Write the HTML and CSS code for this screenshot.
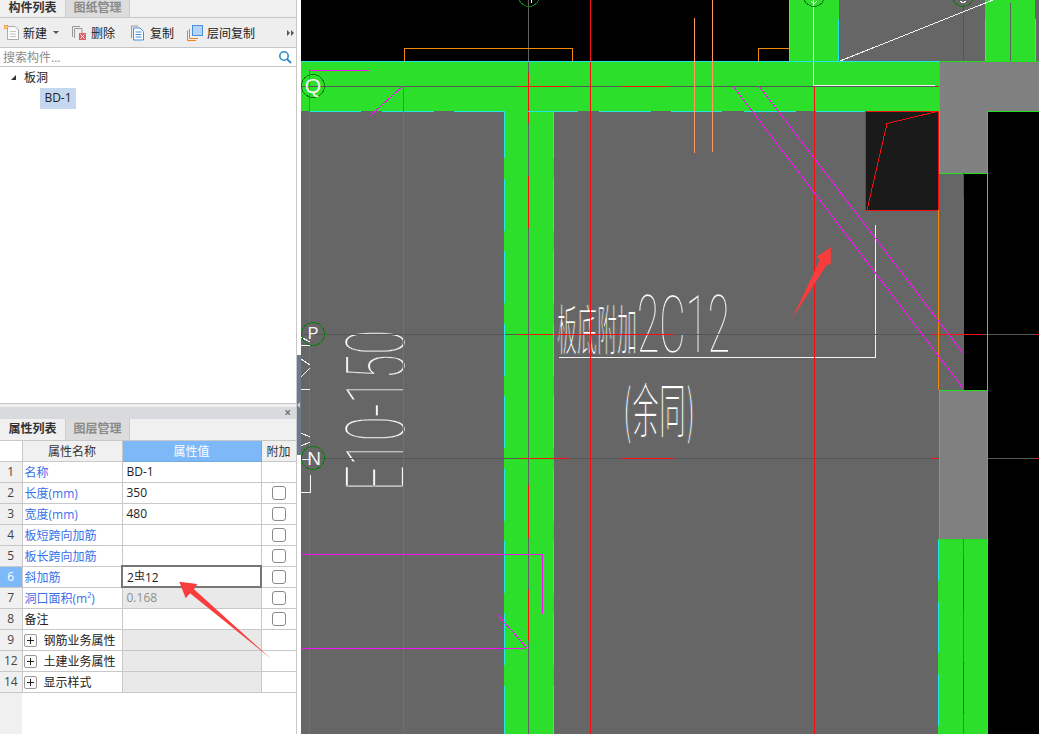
FILE: index.html
```html
<!DOCTYPE html>
<html lang="en">
<head>
    <meta charset="UTF-8">
    <title>构件列表</title>
    <link rel="stylesheet" href="styles.css">
</head>
<body>
    <div class="app">
        <div class="side">
            <div class="tabs">
                <div class="tab active">构件列表</div>
                <div class="tab">图纸管理</div>
            </div>
            <div class="toolbar">
                <div class="tool tool-new">
                    <svg width="16" height="16" viewBox="0 0 16 16"><path d="M3.5 1.5H11L14.5 5V14.5H3.5Z" fill="#fafafa" stroke="#aaa"/><path d="M6 6.5H12M6 9H12M6 11.5H12" stroke="#c4c4c4"/><rect x="0" y="0" width="4" height="4" fill="#f08a24"/><path d="M2 0V4M0 2H4" stroke="#ffd9a0"/></svg>
                    <span>新建</span>
                    <i class="caret"></i>
                </div>
                <div class="tool tool-del">
                    <svg width="16" height="16" viewBox="0 0 16 16"><path d="M1.5 12V1.5H9" fill="none" stroke="#999"/><path d="M3.5 13V3.5H11V8" fill="none" stroke="#999"/><rect x="8" y="8" width="7" height="7" fill="#e2606a"/><path d="M9.5 9.5L13.5 13.5M13.5 9.5L9.5 13.5" stroke="#fff"/></svg>
                    <span>删除</span>
                </div>
                <div class="tool tool-copy">
                    <svg width="16" height="16" viewBox="0 0 16 16"><path d="M1.5 13V1H8" fill="none" stroke="#999"/><path d="M3.5 3H10L13.5 6.500V15H3.500Z" fill="#fff" stroke="#3f8fdc"/><path d="M5.500 7H11.500M5.500 9.500H11.500M5.500 12H11.500" stroke="#3f8fdc"/></svg>
                    <span>复制</span>
                </div>
                <div class="tool tool-floor">
                    <svg width="16" height="16" viewBox="0 0 16 16"><path d="M0.500 15.500V5.500M0.500 15.500H9" fill="none" stroke="#f07f1e"/><path d="M2.500 13.500V4M2.500 13.500H11" fill="none" stroke="#f07f1e"/><rect x="5.500" y="0.500" width="10" height="10" fill="#b4d4fa" stroke="#4a90d9"/></svg>
                    <span>层间复制</span>
                </div>
                <div class="more"><i></i><i></i></div>
            </div>
            <div class="search">
                <span>搜索构件...</span>
                <svg width="14" height="14" viewBox="0 0 14 14"><circle cx="6" cy="6" r="4.200" fill="none" stroke="#2f8fc4" stroke-width="1.600"/><path d="M9 9L13 13" stroke="#2f8fc4" stroke-width="2"/></svg>
            </div>
            <div class="tree">
                <div class="tree-group"><i class="tree-arrow"></i>板洞</div>
                <div class="tree-item">BD-1</div>
            </div>
            <div class="split"></div>
            <div class="panel-head"><span class="close">×</span></div>
            <div class="tabs tabs-props">
                <div class="tab active">属性列表</div>
                <div class="tab">图层管理</div>
            </div>
            <div class="props">
                <table class="prop-table">
                    <colgroup><col class="c-num"><col class="c-name"><col class="c-val"><col class="c-add"></colgroup>
                    <thead>
                        <tr><th class="corner"></th><th>属性名称</th><th class="sel-head">属性值</th><th>附加</th></tr>
                    </thead>
                    <tbody>
                        <tr><td class="num">1</td><td class="blue">名称</td><td class="val">BD-1</td><td></td></tr>
                        <tr><td class="num">2</td><td class="blue">长度(mm)</td><td class="val">350</td><td class="chk"><i></i></td></tr>
                        <tr><td class="num">3</td><td class="blue">宽度(mm)</td><td class="val">480</td><td class="chk"><i></i></td></tr>
                        <tr><td class="num">4</td><td class="blue">板短跨向加筋</td><td class="val"></td><td class="chk"><i></i></td></tr>
                        <tr><td class="num">5</td><td class="blue">板长跨向加筋</td><td class="val"></td><td class="chk"><i></i></td></tr>
                        <tr><td class="num num-sel">6</td><td class="blue">斜加筋</td><td class="val editing">2<span class="rebar">虫</span>12</td><td class="chk"><i></i></td></tr>
                        <tr><td class="num">7</td><td class="blue">洞口面积(m²)</td><td class="val ro">0.168</td><td class="chk"><i></i></td></tr>
                        <tr><td class="num">8</td><td>备注</td><td class="val"></td><td class="chk"><i></i></td></tr>
                        <tr><td class="num">9</td><td class="grp"><i class="plus"></i>钢筋业务属性</td><td class="shade"></td><td></td></tr>
                        <tr><td class="num">12</td><td class="grp"><i class="plus"></i>土建业务属性</td><td class="shade"></td><td></td></tr>
                        <tr><td class="num">14</td><td class="grp"><i class="plus"></i>显示样式</td><td class="shade"></td><td></td></tr>
                    </tbody>
                </table>
            </div>
        </div>
        <div class="gutter"><div class="handle"><i></i></div></div>
        <div class="canvas">
            <svg class="cad" width="738" height="734" viewBox="301 0 738 734">
                <!-- slabs and walls -->
                <rect x="301" y="111" width="638" height="623" fill="#666"/>
                <rect x="939" y="173" width="25" height="217" fill="#666"/>
                <rect x="839" y="0" width="146" height="61" fill="#666"/>
                <rect x="1035" y="0" width="4" height="61" fill="#666"/>
                <rect x="301" y="61" width="638" height="50" fill="#2bdf2b"/>
                <rect x="504" y="111" width="50" height="623" fill="#2bdf2b"/>
                <rect x="789" y="0" width="50" height="61" fill="#2bdf2b"/>
                <rect x="985" y="0" width="50" height="61" fill="#2bdf2b"/>
                <rect x="938" y="539" width="49" height="195" fill="#2bdf2b"/>
                <path d="M939.500 61.500H1039V111.500H987.500V173.500H939.500Z" fill="#808080" stroke="#22dd22"/>
                <rect x="939.500" y="390.500" width="48" height="149" fill="#808080" stroke="#22dd22"/>
                <rect x="865.500" y="111.500" width="73" height="99" fill="#1a1a1a" stroke="#f01010"/>
                <path d="M867 210L887 123.500L935 112" fill="none" stroke="#f01010"/>

                <!-- annotations -->
                <text class="cad-text" transform="translate(404 491) rotate(-90) scale(1 1.330)" textLength="161" lengthAdjust="spacingAndGlyphs">E10-150</text>
                <text class="cad-text" transform="translate(637 352) scale(1 1.300)" textLength="93" lengthAdjust="spacingAndGlyphs">2C12</text>
                <text class="cad-cjk" transform="translate(557 350) scale(.4 1.100)" font-size="50" textLength="200" lengthAdjust="spacingAndGlyphs">板底附加</text>
                <text class="cad-cjk" transform="translate(623 433) scale(.8 1.200)" font-size="50" textLength="90" lengthAdjust="spacingAndGlyphs">(余同)</text>
                <path d="M875.500 225V357.500H559" stroke="#f4f4f4" fill="none"/>

                <!-- axis lines -->
                <g stroke="#565656" fill="none">
                    <path d="M301 86.500H939M301 334.500H939M301 458.500H939M983 334.500H1039M988 458.500H1039"/>
                    <path d="M963.500 0V61"/>
                    <path d="M528.500 0V734" stroke="#606060"/>
                    <path d="M1010.500 3V61" stroke="#606060"/>
                    <path d="M963.500 539V734" stroke="#3c8a50"/>
                </g>
                <g stroke="#f41010" fill="none">
                    <path d="M590.500 0V734M814.500 87V734"/>
                    <path d="M518 86.500H570M621 86.500H670M935 86.500H938"/>
                    <path d="M518 334.500H570M550 334.500H673M931 334.500H983M1035 334.500H1039"/>
                    <path d="M519 458.500H570M622 458.500H674M932 458.500H938M1036 458.500H1039"/>
                    <path d="M528.500 73V123M528.500 176V228M528.500 485V538M528.500 590V641"/>
                    <path d="M963.500 173V197M963.500 559V609M963.500 662V714"/>
                </g>
                <path d="M813.500 0V86M814 85.500H935" stroke="#f4f4f4" fill="none"/>
                <path d="M840 61L993 0" stroke="#f4f4f4" fill="none"/>

                <!-- cyan edges -->
                <g stroke="#22e6e6" fill="none">
                    <path d="M301 61.500H939"/>
                    <path d="M310 111.500H361M382 111.500H434M454 111.500H505M528 111.500H578M599 111.500H651M671 111.500H722M744 111.500H796M816 111.500H865"/>
                    <path d="M504.500 111V158M553.500 111V158"/>
                    <path d="M504.500 179V734M553.500 179V734" stroke-dasharray="52 20.400"/>
                    <path d="M789.500 0V61M838.500 19V61M985.500 19V61M1035.500 19V61"/>
                    <path d="M938.500 540V581M938.500 602V653M938.500 674V726"/>
                </g>

                <!-- orange -->
                <g stroke="#f58a0a" fill="none">
                    <path d="M404.500 61V48.500H572.500V61M758.500 61V48.500H789"/>
                    <path d="M938.500 210V390M987.500 173V390M987.500 539V734"/>
                </g>
                <path d="M694.500 18V153M712.500 0V152" stroke="#ff9a66" fill="none"/>

                <!-- magenta -->
                <g stroke="#f810f8" fill="none">
                    <path d="M309.500 71V734M403.500 86V734"/>
                    <path d="M309 70.500H369"/>
                    <path d="M403 86L370 116"/>
                    <path d="M733 86L963 388M759 86L963 353"/>
                    <path d="M301 554.500H542.500V614M301 648.500H526"/>
                    <path d="M497 614L527 648"/>
                </g>

                <!-- cut off drawing marks at the left edge -->
                <path d="M301 337L310 342M301 345H310M301 359L310 365M301 377L310 368M301 389H310M301 433L310 437M301 446L310 442M301 459H311M310 475V492H301" stroke="#f4f4f4" fill="none"/>

                <!-- axis bubbles -->
                <g fill="none" stroke="#0c7a0c">
                    <circle cx="313" cy="86" r="11.500"/>
                    <circle cx="313" cy="334" r="11.500"/>
                    <circle cx="313" cy="458" r="11.500"/>
                    <circle cx="529" cy="-4" r="10.500"/>
                    <circle cx="814" cy="-4" r="10.500"/>
                    <circle cx="963" cy="-4" r="10.500"/>
                </g>
                <path d="M531 0V3M811 1L814 4L817 1M960 1L963 3L966 1" stroke="#f4f4f4" fill="none"/>
                <text class="axis" x="313" y="93" font-size="21">Q</text>
                <text class="axis" x="313" y="339" font-size="16">P</text>
                <text class="axis" x="314" y="465" font-size="19">N</text>
            </svg>
        </div>
    </div>
    <svg class="marks" width="1039" height="734" viewBox="0 0 1039 734">
        <path d="M179.300 581.700L197.300 584L194 589.300L271 658.700L190 593.300L185.700 598.300Z" fill="#f93c3c"/>
        <path d="M831 247.300L816.700 256.700L820 260L791.700 319.300L826.700 265L830.700 264.300Z" fill="#f93c3c"/>
    </svg>
</body>
</html>
```

FILE: styles.css
```css
* {
    box-sizing: border-box;
}
html, body {
    margin: 0;
    height: 100%;
    overflow: hidden;
}
body {
    position: relative;
    font-family: "Open Sans", "Noto Sans CJK SC", sans-serif;
    font-size: 12px;
    color: #222;
    background: #fff;
}
.app {
    display: flex;
    height: 734px;
}
.side {
    width: 297px;
    display: flex;
    flex-direction: column;
    border-right: 1px solid #c8c8c8;
    background: #fff;
}
.tabs {
    display: flex;
    height: 18px;
    background: #f0f0f0;
    border-bottom: 1px solid #c8c8c8;
    flex: none;
}
.tab {
    width: 65px;
    line-height: 16px;
    text-align: center;
    font-weight: 700;
    color: #333;
}
.tab + .tab {
    background: #dcdcdc;
    color: #8a8a8a;
    border: 1px solid #ccc;
    border-bottom: 0;
    border-top: 0;
}
.toolbar {
    display: flex;
    align-items: center;
    height: 30px;
    background: #eee;
    border-bottom: 1px solid #c4c4c4;
    padding-left: 4px;
    position: relative;
    flex: none;
}
.tool {
    display: flex;
    align-items: center;
    gap: 4px;
}
.tool-new {
    width: 67px;
    gap: 3px;
}
.tool-del {
    width: 59px;
}
.tool-copy {
    width: 57px;
}
.caret {
    margin-left: 3px;
    border: 3px solid transparent;
    border-top: 3px solid #555;
    border-bottom: 0;
}
.more {
    margin-left: auto;
    margin-right: 2px;
    display: flex;
}
.more i {
    border: 3px solid transparent;
    border-left: 3px solid #555;
    border-right: 0;
    margin-left: 1px;
}
.search {
    height: 19px;
    flex: none;
    display: flex;
    justify-content: space-between;
    align-items: center;
    padding: 0 4px 0 3px;
    border-bottom: 1px solid #c4c4c4;
    color: #8c8c8c;
}
.tree {
    flex: 1;
}
.tree-group {
    height: 21px;
    line-height: 21px;
    padding-left: 24px;
    position: relative;
}
.tree-arrow {
    position: absolute;
    left: 11px;
    top: 8px;
    border-left: 5px solid transparent;
    border-bottom: 5px solid #333;
}
.tree-item {
    margin-left: 40px;
    width: 36px;
    height: 21px;
    line-height: 20px;
    text-align: center;
    background: #c5d8f0;
}
.split {
    height: 4px;
    flex: none;
    background: #eee;
    border-top: 1px solid #c8c8c8;
}
.panel-head {
    height: 12px;
    flex: none;
    background: #d9dadd;
    text-align: right;
    padding-right: 5px;
    line-height: 11px;
    color: #777;
}
.close {
    font-size: 12px;
    font-weight: 700;
}
.tabs-props {
    height: 22px;
}
.tabs-props .tab {
    line-height: 20px;
}
.props {
    flex: none;
    height: 293px;
    background: linear-gradient(to right, #f0f0f0 22px, #fff 22px);
}
.prop-table {
    width: 296px;
    table-layout: fixed;
    border-collapse: collapse;
}
.c-num {
    width: 22px;
}
.c-name {
    width: 100px;
}
.c-val {
    width: 139px;
}
.c-add {
    width: 35px;
}
.prop-table th {
    height: 20px;
    padding: 0;
    font-weight: 400;
    background: #f0f0f0;
    color: #333;
    border: 1px solid #c8c8c8;
    border-top: 0;
}
.prop-table th.corner {
    background: #fff;
    border: 0;
}
.prop-table th.sel-head {
    background: #7db8f8;
    color: #fff;
    border-color: #76a9e0;
}
.prop-table td {
    height: 21px;
    padding: 0 0 0 2px;
    border: 1px solid #c8c8c8;
    white-space: nowrap;
    overflow: hidden;
}
.prop-table td.val {
    padding-left: 4px;
}
.prop-table td.num {
    padding: 0;
    text-align: center;
    background: #f0f0f0;
    color: #444;
    border-left: 0;
}
.prop-table td.num-sel {
    background: #7db8f8;
    color: #fff;
}
.blue {
    color: #3a70e8;
}
.prop-table td.editing {
    border: 2px solid #777;
}
.rebar {
    font-size: 11px;
    vertical-align: 2px;
}
.prop-table td.ro {
    background: #e9e9e9;
    color: #8e8e8e;
}
.shade {
    background: #e9e9e9;
}
.chk i {
    display: block;
    width: 14px;
    height: 14px;
    margin-left: 8px;
    border: 1px solid #8a8a8a;
    border-radius: 3px;
    background: #fff;
}
.grp {
    position: relative;
}
.prop-table td.grp {
    padding-left: 21px;
}
.plus {
    position: absolute;
    left: 1px;
    top: 4px;
    width: 13px;
    height: 13px;
    border: 1px solid #999;
    border-radius: 2px;
    background:
        linear-gradient(#222, #222) center / 7px 1px no-repeat,
        linear-gradient(#222, #222) center / 1px 7px no-repeat,
        #fafafa;
}
.gutter {
    width: 4px;
    flex: none;
    display: flex;
    align-items: center;
    background: #fff;
}
.handle {
    width: 4px;
    height: 100px;
    margin-top: 76px;
    background: #6b7b8b;
    display: flex;
    align-items: center;
}
.handle i {
    border: 3px solid transparent;
    border-right: 3px solid #c8ced4;
    border-left: 0;
}
.canvas {
    flex: 1;
    background: #000;
    overflow: hidden;
}
.cad {
    display: block;
    shape-rendering: crispEdges;
}
.axis {
    font-family: "Liberation Sans", sans-serif;
    fill: #f4f4f4;
    text-anchor: middle;
}
.cad-text {
    font-family: "Roboto", sans-serif;
    font-weight: 100;
    font-size: 62px;
    fill: #fff;
    stroke: #666;
    stroke-width: .3;
}
.cad-cjk {
    font-family: "Noto Sans CJK SC", sans-serif;
    fill: #fff;
    stroke: #666;
    stroke-width: 1.600;
}
.marks {
    position: absolute;
    left: 0;
    top: 0;
    pointer-events: none;
}
```
